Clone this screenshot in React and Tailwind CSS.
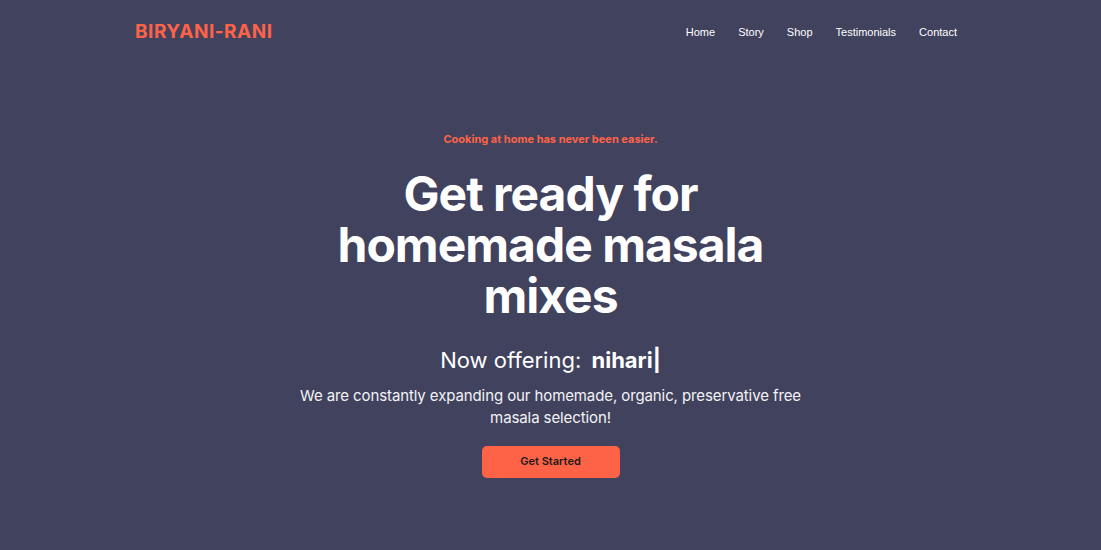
import React from 'react';

const links = ['Home', 'Story', 'Shop', 'Testimonials', 'Contact'];

const App = () => {
  return (
    <div className="min-h-[550px] w-full bg-[#41425e] font-['Inter',sans-serif] text-white">
      <nav className="mx-auto flex h-[64px] w-[831px] items-center justify-between pr-[9px]">
        <div className="text-[19px] font-bold tracking-[0.5px] text-[#ff6347]">BIRYANI-RANI</div>
        <ul className="flex gap-[23px] font-['Liberation_Sans',Arial,sans-serif] text-[11px]">
          {links.map((l) => (
            <li key={l}>
              <a href="#" className="text-white">{l}</a>
            </li>
          ))}
        </ul>
      </nav>

      <section className="flex flex-col items-center pt-[67px] text-center">
        <p className="text-[11px] font-bold text-[#ff6347]">Cooking at home has never been easier.</p>
        <h1 className="mt-[20px] w-[450px] text-[48px] font-bold leading-[51px] tracking-[-1px]">
          Get ready for homemade masala mixes
        </h1>
        <h2 className="mt-[24px] text-[22px] leading-[30px]">
          Now offering: <span className="ml-[4px] font-bold">nihari</span>
          <span className="font-bold">|</span>
        </h2>
        <p className="mt-[10px] w-[520px] text-[15px] leading-[22px] tracking-[-0.1px] text-[#f3f3f6]">
          We are constantly expanding our homemade, organic, preservative free masala selection!
        </p>
        <button className="mt-[17px] h-[32px] w-[138px] rounded-[5px] bg-[#ff6347] text-[11px] font-semibold text-[#1a1a1a]">
          Get Started
        </button>
      </section>
    </div>
  );
};

export default App;
